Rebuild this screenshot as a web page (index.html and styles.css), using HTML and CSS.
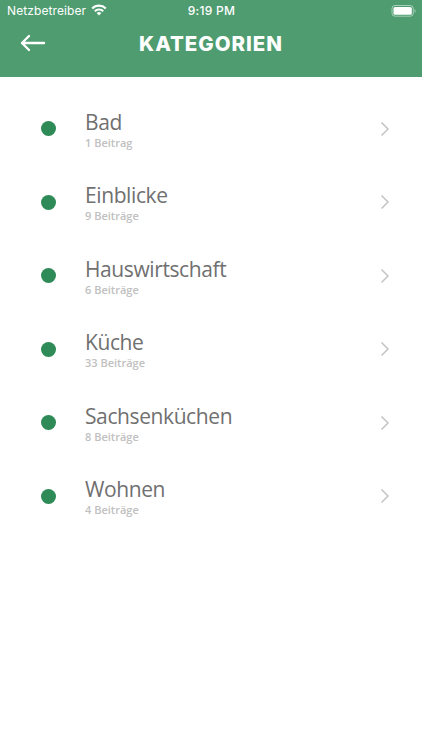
FILE: index.html
```
<!DOCTYPE html>
<html lang="de">
<head>
    <meta charset="UTF-8">
    <meta name="viewport" content="width=device-width, initial-scale=1.0">
    <title>Kategorien</title>
    <link rel="stylesheet" href="styles.css">
</head>
<body>
    <header class="header">
        <div class="status-bar">
            <div class="carrier">
                <span class="carrier-name">Netzbetreiber</span>
                <svg class="wifi" width="16" height="12" viewBox="0 0 16 12" fill="none" stroke="#fff" stroke-width="2.2">
                    <path d="M1.2 4.5a9.7 9.7 0 0 1 13.6 0"/>
                    <path d="M3.8 7.2a6 6 0 0 1 8.4 0"/>
                    <path d="M5.6 9.1a3.4 3.4 0 0 1 4.8 0L8 11.5z" fill="#fff" stroke="none"/>
                </svg>
            </div>
            <span class="time">9:19 PM</span>
            <svg class="battery" width="26" height="12" viewBox="0 0 26 12">
                <rect x="2" y="0.5" width="21.3" height="10.7" rx="3" fill="none" stroke="#fff" stroke-opacity="0.5"/>
                <rect x="3.5" y="2" width="18.3" height="7.7" rx="1.5" fill="#fff"/>
                <path d="M24.6 4v4c1.4-.6 1.4-3.4 0-4z" fill="#fff" fill-opacity="0.5"/>
            </svg>
        </div>
        <div class="nav-bar">
            <a class="back" href="#" aria-label="Zurück">
                <svg width="26" height="18" viewBox="0 0 26 18" fill="none" stroke="#fff" stroke-width="2.4" stroke-linecap="round" stroke-linejoin="round">
                    <path d="M24 9H2M9 2L2 9l7 7"/>
                </svg>
            </a>
            <h1>KATEGORIEN</h1>
        </div>
    </header>

    <ul class="categories">
        <li class="category">
            <span class="dot"></span>
            <div class="info">
                <div class="name">Bad</div>
                <div class="count">1 Beitrag</div>
            </div>
            <svg class="chevron" width="10" height="16" viewBox="0 0 10 16"><path d="M1.5 1.5L8 8l-6.5 6.5"/></svg>
        </li>
        <li class="category">
            <span class="dot"></span>
            <div class="info">
                <div class="name">Einblicke</div>
                <div class="count">9 Beiträge</div>
            </div>
            <svg class="chevron" width="10" height="16" viewBox="0 0 10 16"><path d="M1.5 1.5L8 8l-6.5 6.5"/></svg>
        </li>
        <li class="category">
            <span class="dot"></span>
            <div class="info">
                <div class="name">Hauswirtschaft</div>
                <div class="count">6 Beiträge</div>
            </div>
            <svg class="chevron" width="10" height="16" viewBox="0 0 10 16"><path d="M1.5 1.5L8 8l-6.5 6.5"/></svg>
        </li>
        <li class="category">
            <span class="dot"></span>
            <div class="info">
                <div class="name">Küche</div>
                <div class="count">33 Beiträge</div>
            </div>
            <svg class="chevron" width="10" height="16" viewBox="0 0 10 16"><path d="M1.5 1.5L8 8l-6.5 6.5"/></svg>
        </li>
        <li class="category">
            <span class="dot"></span>
            <div class="info">
                <div class="name">Sachsenküchen</div>
                <div class="count">8 Beiträge</div>
            </div>
            <svg class="chevron" width="10" height="16" viewBox="0 0 10 16"><path d="M1.5 1.5L8 8l-6.5 6.5"/></svg>
        </li>
        <li class="category">
            <span class="dot"></span>
            <div class="info">
                <div class="name">Wohnen</div>
                <div class="count">4 Beiträge</div>
            </div>
            <svg class="chevron" width="10" height="16" viewBox="0 0 10 16"><path d="M1.5 1.5L8 8l-6.5 6.5"/></svg>
        </li>
    </ul>
</body>
</html>
```
FILE: styles.css
```
* {
    box-sizing: border-box;
}
body {
    margin: 0;
    background-color: #fff;
    font-family: "Open Sans", sans-serif;
}
.header {
    height: 76.5px;
    background-color: #4e9c70;
    color: #fff;
}
.status-bar {
    display: grid;
    grid-template-columns: 1fr auto 1fr;
    align-items: center;
    height: 22px;
    padding: 0 6px 0 7px;
    font-family: Inter, sans-serif;
    font-size: 12px;
    line-height: 22px;
}
.carrier {
    display: flex;
    align-items: center;
    gap: 4.5px;
}
.carrier-name {
    letter-spacing: 0.1px;
}
.wifi {
    margin-bottom: 2px;
}
.time {
    font-weight: 500;
    letter-spacing: 0.3px;
}
.battery {
    justify-self: end;
    margin-bottom: 1px;
}
.nav-bar {
    display: grid;
    grid-template-columns: 60px 1fr 60px;
    align-items: center;
    height: 43px;
}
.back {
    display: flex;
    padding: 0 0 2px 20px;
}
h1 {
    margin: 0;
    font-family: Inter, sans-serif;
    font-size: 20.5px;
    font-weight: 800;
    line-height: 43px;
    letter-spacing: 0.95px;
    text-align: center;
}
.categories {
    margin: 0;
    padding: 15.5px 0 0;
    list-style: none;
}
.category {
    display: flex;
    align-items: center;
    height: 73.5px;
    padding: 0 32px 0 41px;
}
.dot {
    width: 15px;
    height: 15px;
    margin-right: 29px;
    border-radius: 50%;
    background-color: #2e8b57;
}
.info {
    flex: 1;
    padding-top: 2px;
}
.name {
    color: #707070;
    font-size: 21px;
    line-height: 26px;
    letter-spacing: -0.4px;
}
.count {
    color: #c0c0c0;
    font-size: 11px;
    font-weight: 600;
    line-height: 16px;
}
.chevron {
    fill: none;
    stroke: #c4c4c4;
    stroke-width: 1.5;
}
```
